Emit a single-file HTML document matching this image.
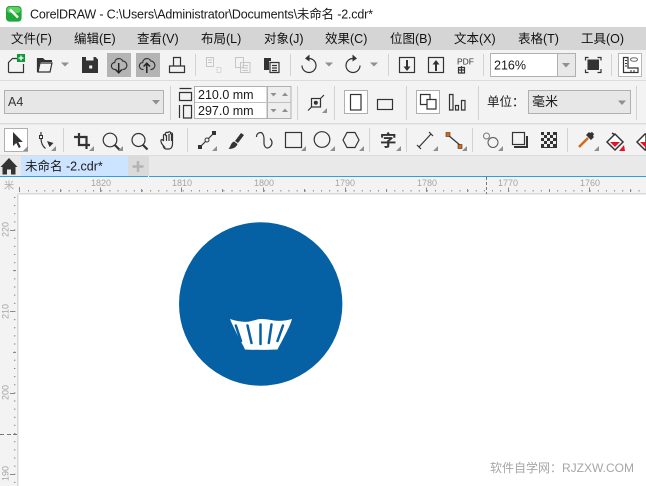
<!DOCTYPE html>
<html lang="zh">
<head>
<meta charset="utf-8">
<title>CorelDRAW</title>
<style>
html,body{margin:0;padding:0;background:#fff;width:646px;height:486px;overflow:hidden}
svg{display:block;position:absolute;left:0;top:0}
text{font-family:"Liberation Sans","Noto Sans CJK SC",sans-serif;fill:#1a1a1a}
.m{font-size:12.5px;fill:#111}
.r{font-size:9px;fill:#a4a4a4}
.ic{fill:none;stroke:#333;stroke-width:1.2}
.k{fill:#333;stroke:none}
.sep{stroke:#d2d2d2;stroke-width:1}
.tri{fill:#8f8f8f}
</style>
</head>
<body>
<svg width="646" height="486" viewBox="0 0 646 486" xmlns="http://www.w3.org/2000/svg">
<!-- backgrounds -->
<rect width="646" height="486" fill="#fff"/>
<rect y="27" width="646" height="23" fill="#d5d5d5"/>
<rect y="50" width="646" height="127" fill="#f3f3f3"/>
<rect y="80" width="646" height="1" fill="#dcdcdc"/>
<rect y="123" width="646" height="1.5" fill="#dcdcdc"/>
<rect y="155" width="646" height="1.5" fill="#dcdcdc"/>
<rect y="156" width="646" height="20" fill="#e9e9e9"/>

<!-- title bar -->
<rect x="6" y="6" width="15.6" height="15.6" rx="3.5" fill="#1fa83a"/>
<rect x="7" y="7" width="13.6" height="6" rx="3" fill="#5fce63"/>
<path d="M10 9.5L18 17.5" stroke="#fff" stroke-width="2.4" fill="none"/>
<text x="30" y="18.5" font-size="12.5" textLength="343" lengthAdjust="spacing">CorelDRAW - C:\Users\Administrator\Documents\未命名 -2.cdr*</text>

<!-- menu -->
<text class="m" x="11" y="43">文件(F)</text>
<text class="m" x="74" y="43">编辑(E)</text>
<text class="m" x="137" y="43">查看(V)</text>
<text class="m" x="201" y="43">布局(L)</text>
<text class="m" x="264" y="43">对象(J)</text>
<text class="m" x="325" y="43">效果(C)</text>
<text class="m" x="390" y="43">位图(B)</text>
<text class="m" x="454" y="43">文本(X)</text>
<text class="m" x="518" y="43">表格(T)</text>
<text class="m" x="581" y="43">工具(O)</text>

<!-- standard toolbar -->
<path class="ic" d="M8.5 72.5V62.5L12.5 58.5H17M23.5 64V72.5H8.5"/>
<rect x="17" y="54" width="8" height="8" fill="#0f9a3a"/>
<path d="M21 55.5v5M18.5 58h5" stroke="#fff" stroke-width="1.3"/>
<path class="k" d="M37 58h6l2 2h7v2H41l-2 2v7l-2 1z"/>
<path class="ic" d="M38 72L40 63H52L50 72ZM37.500 72V58.500"/>
<path class="tri" d="M61 62.500h8l-4 4z"/>
<path class="k" d="M82 57h13.500l2.500 2.500V73H82z"/>
<rect x="86" y="57" width="7.500" height="3.500" fill="#f3f3f3"/>
<rect x="89.200" y="65.500" width="3" height="3" fill="#f3f3f3"/>
<rect x="107" y="53" width="24" height="24" fill="#b4b4b4"/>
<rect x="136" y="53" width="24" height="24" fill="#b4b4b4"/>
<path class="ic" d="M115.500 69.500h-.5a3.500 3.500 0 0 1-.3-7a4.200 4.200 0 0 1 8-1.500a4.300 4.300 0 0 1 .8 8.500h-1"/>
<path d="M118.700 63V72.500M115.500 69.500l3.200 3.300 3.200-3.300" fill="none" stroke="#222" stroke-width="1.500"/>
<path class="ic" transform="translate(28 0)" d="M115.500 69.500h-.5a3.500 3.500 0 0 1-.3-7a4.200 4.200 0 0 1 8-1.500a4.300 4.300 0 0 1 .8 8.500h-1"/>
<path d="M146.800 73V63.500M143.600 66.500l3.200-3.300 3.200 3.300" fill="none" stroke="#222" stroke-width="1.500"/>
<path class="ic" d="M173.500 65.500V57.500h7v8M169.500 72.500V66h15v6.500Z"/>
<line class="sep" x1="195.500" y1="54" x2="195.500" y2="76"/>
<g fill="none" stroke="#c6c6c6">
<path d="M206.500 57.500h7v9h-7zM208 60h4M208 62.500h4"/>
<path d="M217 67.500h4v5h-4z" stroke-dasharray="1.500 1"/>
<path d="M235.500 57.500h8v10h-8zM240.500 62.500h9.500v10h-9.500zM242.500 65.500h5.500M242.500 68h5.500M242.500 70.500h5.500"/>
</g>
<path class="k" d="M264 58h7v3h-2v9h-5z"/>
<path class="ic" d="M270 62.500h9v10h-9zM272 65.500h5M272 68h5M272 70.500h5"/>
<line class="sep" x1="290.500" y1="54" x2="290.500" y2="76"/>
<path class="ic" d="M309 58.500a7 7 0 1 1-7 7"/>
<path class="k" d="M305 58.500l4.500-4v7z"/>
<path class="tri" d="M325 62.500h8l-4 4z"/>
<path class="ic" d="M353 58.500a7 7 0 1 0 7 7"/>
<path class="k" d="M357 58.500l-4.500-4v7z"/>
<path class="tri" d="M370 62.500h8l-4 4z"/>
<line class="sep" x1="388.500" y1="54" x2="388.500" y2="76"/>
<rect class="ic" x="399.500" y="57.500" width="15" height="15"/>
<path class="k" d="M406 60h2v6.500h2.500L407 71l-3.500-4.500H406z"/>
<rect class="ic" x="428.500" y="57.500" width="15" height="15"/>
<path class="k" d="M435 71h2v-6.500h2.500L436 60l-3.500 4.500H435z"/>
<text x="457" y="64.500" font-size="8.500" style="fill:#333">PDF</text>
<path class="ic" d="M458.500 67.500h6v5.500h-6zM461.500 66v7M458.500 70h6" stroke-width="1"/>
<line class="sep" x1="483.500" y1="54" x2="483.500" y2="76"/>
<rect x="490.500" y="53.500" width="85" height="23" fill="#fff" stroke="#b0b0b0"/>
<rect x="557.500" y="53.500" width="18" height="23" fill="#e8e8e8" stroke="#b0b0b0"/>
<path class="tri" d="M562 63h8l-4 4.500z"/>
<text x="494" y="69.500" font-size="12.500">216%</text>
<rect x="587.500" y="59.500" width="11.500" height="10.500" fill="#333"/>
<path d="M585.500 60.500v-3h3M597.500 57.500h3.500v3M601 69v3.500h-3.500M588.500 72.500h-3v-3" fill="none" stroke="#333" stroke-width="1.200"/>
<line class="sep" x1="611.500" y1="54" x2="611.500" y2="76"/>
<rect x="618.500" y="53.500" width="23" height="23" fill="#fff" stroke="#b8b8b8"/>
<path class="ic" d="M623.500 57.500v15h14.500v-4.500h-10v-10.500z"/>
<path d="M625 60.500h2M625 63.500h2M625 66h2M631 70v2M634 70v2" stroke="#333"/>
<ellipse cx="634" cy="59.500" rx="3.500" ry="1.800" fill="none" stroke="#666"/>

<!-- property bar -->
<rect x="4.500" y="90.500" width="159" height="23" fill="#e7e7e7" stroke="#b0b0b0"/>
<text x="8" y="106" font-size="12.500" style="fill:#333">A4</text>
<path class="tri" d="M152 100h8l-4 4.500z"/>
<line class="sep" x1="170.500" y1="86" x2="170.500" y2="120"/>
<path class="ic" d="M179.500 92.500h12v8h-12zM179.500 88.500h12" stroke-width="1"/>
<path class="ic" d="M183.500 105.500h8v12.500h-8zM179.500 105v13" stroke-width="1"/>
<rect x="194.500" y="86.500" width="72.500" height="32" fill="#fff" stroke="#b0b0b0"/>
<line x1="195" y1="102.500" x2="267" y2="102.500" stroke="#c0c0c0"/>
<rect x="267.500" y="86.500" width="23.500" height="32" fill="#eee" stroke="#b0b0b0"/>
<line x1="267" y1="102.500" x2="291" y2="102.500" stroke="#c0c0c0"/>
<text x="198" y="99" font-size="12.500">210.0 mm</text>
<text x="198" y="115" font-size="12.500">297.0 mm</text>
<path class="tri" d="M270.500 93h6l-3 3.500zM282 96h6l-3-3.500zM270.500 109h6l-3 3.500zM282 112h6l-3-3.500z"/>
<line class="sep" x1="297.500" y1="86" x2="297.500" y2="120"/>
<rect class="ic" x="311.500" y="98.500" width="9" height="8.500"/>
<circle cx="315.800" cy="102.700" r="2" fill="#333"/>
<path class="ic" d="M308 110.500l3.500-3.500M320.500 98.500l3.500-3.500" stroke-width="1"/>
<path class="tri" d="M322 113l5-5v5z"/>
<line class="sep" x1="334.500" y1="86" x2="334.500" y2="120"/>
<rect x="344.500" y="90.500" width="23" height="23" fill="#fff" stroke="#b0b0b0"/>
<rect class="ic" x="350.500" y="94.500" width="10.500" height="15.500"/>
<rect class="ic" x="377.500" y="99.500" width="15" height="10"/>
<line class="sep" x1="406.500" y1="86" x2="406.500" y2="120"/>
<rect x="416.500" y="90.500" width="23" height="23" fill="#fff" stroke="#b0b0b0"/>
<path class="ic" d="M420.500 94.500h9.500v10h-9.500z"/>
<path class="ic" style="fill:#fff" d="M427 99.500h9v9.500h-9z"/>
<path class="ic" d="M449.500 94.500h3.500v15.500h-3.500zM455.500 105.500h3v4.500h-3zM461.500 100.500h3.500v9.500h-3.500z"/>
<line class="sep" x1="478.500" y1="86" x2="478.500" y2="120"/>
<text x="487" y="106" font-size="12.500">单位：</text>
<rect x="528.500" y="90.500" width="102" height="23" fill="#e7e7e7" stroke="#b0b0b0"/>
<text x="532" y="106" font-size="13">毫米</text>
<path class="tri" d="M618 100.500h8l-4 4.500z"/>
<line class="sep" x1="636.500" y1="86" x2="636.500" y2="120"/>

<!-- toolbox -->
<rect x="4.500" y="128.500" width="23" height="23" fill="#fff" stroke="#b0b0b0"/>
<path class="k" d="M13 132l0 14 3.300-3 2.500 5 2-1-2.500-5h4.500z"/>
<path class="tri" d="M23 151l5-5v5z"/>
<rect x="39.500" y="135.500" width="3" height="3" fill="none" stroke="#333"/>
<path class="ic" d="M41 132v3.500M41 138.500c0 3.500 1.500 7.500 4.500 10" stroke-width="1"/>
<path class="k" d="M47 141l6.500 2-4 4z"/>
<path class="tri" d="M51 151l5-5v5z"/>
<line class="sep" x1="63.500" y1="128" x2="63.500" y2="152"/>
<path d="M79 133v12h11M74 137h12.500v12" fill="none" stroke="#333" stroke-width="2.200"/>
<path class="tri" d="M89 151l5-5v5z"/>
<circle class="ic" cx="110" cy="140" r="6.800"/>
<path d="M114.800 145l4.500 4.500" stroke="#333" stroke-width="2.200"/>
<path class="tri" d="M118 151l5-5v5z"/>
<circle class="ic" cx="138.500" cy="140" r="6.500"/>
<path d="M143 145l4.500 4.500" stroke="#333" stroke-width="2.200"/>
<path class="ic" transform="translate(-.5 1)" d="M165 146c-2-2-4-5-3.500-7 1-1 2 0 2.500 1v-6c1-1.500 2 0 2 0v-2c1-1 2-1 2.500 0v-.5c1-1 2-1 2.500 0v1c1-1 2-.5 2 .5v10c0 2-1 5-3.500 5h-3c-1 0-2-1-2.500-2zM167 134v6M169.500 133v7M172 133v7" stroke-width="1.100"/>
<line class="sep" x1="187.500" y1="128" x2="187.500" y2="152"/>
<path class="ic" d="M200 147l14-14" stroke-width="1.100"/>
<rect class="k" x="198" y="145" width="4" height="4"/>
<rect class="k" x="212" y="131" width="4" height="4"/>
<circle cx="207" cy="140" r="2" fill="#f3f3f3" stroke="#333"/>
<path class="tri" d="M212 151l5-5v5z"/>
<path class="k" d="M241 133l3 2-6 8-3-2zM234 141.500l3.500 2.500c-1 3.500-5 5-9 5 2-2 2-6 5.500-7.500z"/>
<path class="ic" d="M256.500 137c0-3 2-4.500 4-4.500s3.500 3 3.500 6v5c0 3 2 4.500 3.500 4.500s4.500-2 4.500-5.500c0-2-1-3-2-4" stroke-width="1.500"/>
<rect class="ic" x="285.500" y="132.500" width="16" height="15"/>
<path class="tri" d="M301 151l5-5v5z"/>
<circle class="ic" cx="322" cy="139.500" r="7.800"/>
<path class="tri" d="M330 151l5-5v5z"/>
<path class="ic" d="M347 132.500h8l4 7.500-4 7.500h-8l-4-7.500z"/>
<path class="tri" d="M359 151l5-5v5z"/>
<line class="sep" x1="369.500" y1="128" x2="369.500" y2="152"/>
<text x="380" y="146.500" font-size="16.500" font-weight="700" style="fill:#333">字</text>
<path class="tri" d="M396 151l5-5v5z"/>
<line class="sep" x1="406.500" y1="128" x2="406.500" y2="152"/>
<path class="ic" d="M419 147l12-13M417 145l4 4M429 132l4 4" stroke-width="1"/>
<path class="tri" d="M433 151l5-5v5z"/>
<path class="ic" d="M448 135l13 11" stroke-width="1.100"/>
<rect x="446" y="132.500" width="4" height="4" fill="#e8630a" stroke="#333" stroke-width=".6"/>
<rect x="458" y="144.500" width="4" height="4" fill="#e8630a" stroke="#333" stroke-width=".6"/>
<path class="tri" d="M462 151l5-5v5z"/>
<line class="sep" x1="472.500" y1="128" x2="472.500" y2="152"/>
<circle cx="486.500" cy="136" r="3" fill="none" stroke="#777"/>
<circle cx="493" cy="142.500" r="5" fill="none" stroke="#555"/>
<path class="tri" d="M498 151l5-5v5z"/>
<rect class="ic" x="512.500" y="132.500" width="12" height="12"/>
<path d="M527 136v11h-13" fill="none" stroke="#333" stroke-width="2"/>
<rect x="541" y="132" width="16" height="16" fill="#333"/>
<path d="M544 132h3v3h-3zM550 132h3v3h-3zM541 135h3v3h-3zM547 135h3v3h-3zM553 135h3v3h-3zM544 138h3v3h-3zM550 138h3v3h-3zM541 141h3v3h-3zM547 141h3v3h-3zM553 141h3v3h-3zM544 144h3v3h-3zM550 144h3v3h-3z" fill="#eee"/>
<line class="sep" x1="567.500" y1="128" x2="567.500" y2="152"/>
<path d="M579 147l9-9" stroke="#d46a1c" stroke-width="2.500"/>
<path class="k" d="M586 135l3-3 1 1 2-1 2 2-1 2 1 1-3 3z"/>
<path class="tri" d="M594 151l5-5v5z"/>
<path d="M607 142l8-8 8 8-8 8z" fill="#fff" stroke="#333" stroke-width="1.500"/>
<path d="M610 142h10l-5 5z" fill="#e8102a"/>
<path d="M612 133l3 2" stroke="#333" stroke-width="1.500"/>
<path d="M619 151l5-6 1 6z" fill="#e8102a"/>
<path d="M637 142l8-8 1 0v16l-1 0z" fill="#fff" stroke="#333" stroke-width="1.500"/>
<path d="M640 142h6v5h-1z" fill="#e8102a"/>

<!-- tab bar -->
<path class="k" d="M0.500 167l8.500-9 8.500 9h-2v7.500h-4.500v-5h-4v5H2.500V167z"/>
<rect x="21" y="156" width="107" height="20" fill="#cce4ff"/>
<text x="25" y="170.500" font-size="12.500">未命名 -2.cdr*</text>
<rect x="128" y="156" width="21" height="20" fill="#dadada"/>
<path d="M138 161v11M132.500 166.500h11" stroke="#b4b4b4" stroke-width="2.500"/>
<rect y="176" width="646" height="1" fill="#2aa2e0"/>
<rect x="148" y="176" width="1" height="1" fill="#fff"/>

<!-- rulers -->
<rect y="177" width="646" height="17" fill="#f3f3f3"/>
<rect y="177" width="18" height="309" fill="#f3f3f3"/>
<rect x="18" y="193" width="628" height="1.500" fill="#dadada"/>
<rect x="17" y="194" width="1.500" height="292" fill="#dadada"/>
<text class="r" x="91" y="186">1820</text>
<text class="r" x="172" y="186">1810</text>
<text class="r" x="254" y="186">1800</text>
<text class="r" x="335" y="186">1790</text>
<text class="r" x="417" y="186">1780</text>
<text class="r" x="498" y="186">1770</text>
<text class="r" x="580" y="186">1760</text>
<text x="4" y="189" font-size="10" style="fill:#aaa">米</text>
<g stroke="#8a8a8a" stroke-width="1" fill="none">
<path d="M19.500 187v5M100.500 187.500v4.500M181.500 187.500v4.500M263.500 187.500v4.500M345.500 187.500v4.500M426.500 187.500v4.500M508.500 187.500v4.500M589.500 187.500v4.500"/>
<path d="M60.500 189v3M141.500 189v3M222.500 189v3M304.500 189v3M386.500 189v3M467.500 189v3M549.500 189v3M630.500 189v3"/>
<path d="M28 190.700H646" stroke-width="1.500" stroke-dasharray="1 7.140"/>
<path d="M10 230.500h5M10 311.500h5M10 393.500h5M10 474.500h5"/>
<path d="M13 270.500h3M13 352.500h3M13 434.500h3"/>
<path d="M14.700 197V486" stroke-width="1.500" stroke-dasharray="1 7.140"/>
</g>
<path d="M486.500 177v17" stroke="#777" stroke-dasharray="3 2"/>
<path d="M0 434.500h17" stroke="#777" stroke-dasharray="4 3"/>
<text class="r" transform="translate(8.500 237) rotate(-90)">220</text>
<text class="r" transform="translate(8.500 319) rotate(-90)">210</text>
<text class="r" transform="translate(8.500 400) rotate(-90)">200</text>
<text class="r" transform="translate(8.500 481) rotate(-90)">190</text>

<!-- artwork -->
<circle cx="260.700" cy="304" r="81.700" fill="#0561a4"/>
<path fill="#fff" d="M230 319C236 321 242 322 247 321.800C252 321.500 257 319 261 319C266 319 270 319.800 274 320.500C280 321.500 286 320.500 292 319C290 326 286 333 283 339C281 343 279 346 277.500 349.500C267 350 255 350 245 349.500C243 345 240 340 237 334C234.500 329 232 324 230 319Z"/>
<g stroke="#0561a4" stroke-width="2.500" stroke-linecap="round" fill="none">
<path d="M235.800 325.500L241 341"/>
<path d="M247.500 325.500L251.500 343"/>
<path d="M260.500 324.500V344"/>
<path d="M271.500 324.500L268.800 343"/>
<path d="M283 325.500L277.500 341"/>
</g>

<!-- watermark -->
<text x="490" y="472" font-size="12" style="fill:#a6a6a6">软件自学网：RJZXW.COM</text>
</svg>
</body>
</html>
